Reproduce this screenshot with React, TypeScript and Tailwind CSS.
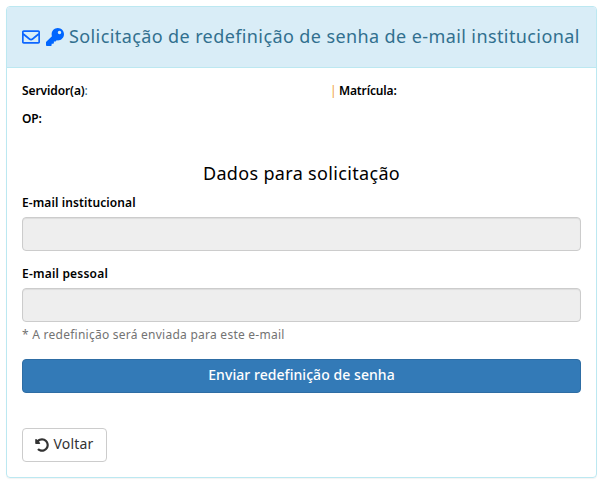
import { FaKey, FaRegEnvelope, FaUndoAlt } from "react-icons/fa";

const control =
  "mt-[4px] block h-[34px] w-full rounded border border-[#ccc] bg-[#eee] px-3 text-sm shadow-[inset_0_1px_1px_rgba(0,0,0,0.075)]";

export default function App() {
  return (
    <div className="h-[485px] bg-white px-1.5 pt-1.5 font-['Noto_Sans',sans-serif] text-black">
      <section className="mr-[1px] h-[472px] overflow-hidden rounded border border-[#bce8f1] shadow-[0_1px_1px_rgba(0,0,0,0.05)]">
        <header className="flex h-[61px] items-center whitespace-nowrap border-b border-[#bce8f1] bg-[#d9edf7] px-[15px] text-[#31708f]">
          <FaRegEnvelope className="size-[18px] shrink-0 text-[#0d66ff]" />
          <FaKey className="ml-[6px] size-[18px] shrink-0 text-[#0066ff]" />
          <h1 className="ml-[5px] pb-[2px] text-[18px] leading-5 tracking-[0.4px]">
            Solicitação de redefinição de senha de e-mail institucional
          </h1>
        </header>
        <div className="px-[15px] pt-[13px]">
          <div className="flex text-[12px] leading-5">
            <p className="w-[308px] tracking-[-0.1px]">
              <b className="font-semibold">Servidor(a)</b>
              <span className="text-[#31708f]">:</span>
            </p>
            <p className="flex tracking-[-0.15px]">
              <span className="w-[9px] text-[#f0a030]">|</span>
              <b className="font-semibold">Matrícula:</b>
            </p>
          </div>
          <p className="mt-2 text-[12px] font-semibold leading-5 tracking-[-0.2px]">OP:</p>
          <h2 className="mt-[32px] text-center text-[18px] leading-6 tracking-[0.33px]">Dados para solicitação</h2>
          <form>
            <label className="mt-2 block text-[12px] font-semibold leading-5 tracking-[0.1px]">
              E-mail institucional
              <input disabled className={control} />
            </label>
            <label className="mt-[13px] block text-[12px] font-semibold leading-5 tracking-[0.2px]">
              E-mail pessoal
              <input disabled className={control} />
            </label>
            <p className="mt-[3px] text-[12px] leading-5 tracking-[0.25px] text-[#737373]">
              * A redefinição será enviada para este e-mail
            </p>
            <button
              type="button"
              className="mt-[14px] block h-[34px] w-full rounded border border-[#2e6da4] bg-[#337ab7] pb-[2px] text-[14px] font-medium leading-5 tracking-[0.06px] text-white"
            >
              Enviar redefinição de senha
            </button>
            <button
              type="button"
              className="mt-[35px] flex h-[34px] w-[85px] items-center justify-center gap-1 whitespace-nowrap rounded border border-[#ccc] bg-white pb-px text-[14px] leading-5 tracking-[0.2px] text-[#333]"
            >
              <FaUndoAlt className="size-[14px]" />
              <span className="pb-px">Voltar</span>
            </button>
          </form>
        </div>
      </section>
    </div>
  );
}
